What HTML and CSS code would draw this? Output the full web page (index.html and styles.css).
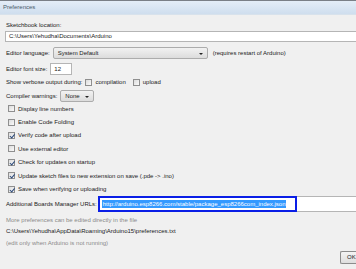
FILE: index.html
```html
<!DOCTYPE html>
<html lang="en">
<head>
    <meta charset="UTF-8">
    <meta name="viewport" content="width=device-width, initial-scale=1.0">
    <title>Preferences</title>
    <link rel="stylesheet" href="styles.css">
</head>
<body>
    <div class="window">
        <div class="titlebar">Preferences</div>
        <div class="content">
            <div class="label-top">Sketchbook location:</div>
            <div class="field path">C:\Users\Yehudha\Documents\Arduino</div>

            <div class="row lang">
                <span class="label">Editor language:</span>
                <div class="select lang-select">System Default<span class="arrow"></span></div>
                <span class="note">(requires restart of Arduino)</span>
            </div>

            <div class="row size">
                <span class="label">Editor font size:</span>
                <div class="field small">12</div>
            </div>

            <div class="row verbose">
                <span class="label">Show verbose output during:</span>
                <span class="check"></span><span class="opt">compilation</span>
                <span class="check"></span><span class="opt">upload</span>
            </div>

            <div class="row warn">
                <span class="label">Compiler warnings:</span>
                <div class="select warn-select">None<span class="arrow"></span></div>
            </div>

            <div class="checklist">
                <div class="item"><span class="check"></span>Display line numbers</div>
                <div class="item"><span class="check"></span>Enable Code Folding</div>
                <div class="item"><span class="check on"></span>Verify code after upload</div>
                <div class="item"><span class="check"></span>Use external editor</div>
                <div class="item"><span class="check on"></span>Check for updates on startup</div>
                <div class="item"><span class="check on"></span>Update sketch files to new extension on save (.pde -&gt; .ino)</div>
                <div class="item"><span class="check on"></span>Save when verifying or uploading</div>
            </div>

            <div class="row urls">
                <span class="label url-label">Additional Boards Manager URLs:</span>
                <div class="url-field">
                    <div class="focus"><span class="selected">http://arduino.esp8266.com/stable/package_esp8266com_index.json</span></div>
                </div>
            </div>

            <div class="info muted">More preferences can be edited directly in the file</div>
            <div class="info">C:\Users\Yehudha\AppData\Roaming\Arduino15\preferences.txt</div>
            <div class="info muted">(edit only when Arduino is not running)</div>

            <div class="buttons">
                <div class="button">OK</div>
            </div>
        </div>
    </div>
</body>
</html>
```

FILE: styles.css
```css
body {
    margin: 0;
    width: 356px;
    height: 269px;
    overflow: hidden;
    font-family: "Liberation Sans", Arial, sans-serif;
    font-size: 6px;
    color: #1a1a1a;
    background-color: #f0f0f0;
}
.window {
    height: 269px;
    border-top: 1px solid #7a7f86;
}
.titlebar {
    height: 13px;
    line-height: 12px;
    padding-left: 3px;
    color: #4a5a6a;
    background: linear-gradient(#e4edf7, #cfdeee);
    border-bottom: 1px solid #d8e2ec;
}
.content {
    padding-left: 6px;
}
.label-top {
    margin-top: 6px;
    height: 9px;
    line-height: 9px;
}
.field {
    background: #fff;
    border: 1px solid #b5b5b5;
    box-sizing: border-box;
    line-height: 9px;
    padding-left: 3px;
}
.path {
    margin-top: 1px;
    margin-left: -1px;
    height: 11px;
    border-right: none;
}
.row {
    display: flex;
    align-items: center;
    white-space: nowrap;
}
.label {
    margin-right: 3px;
}
.url-label {
    margin-right: 1px;
}
.lang {
    margin-top: 5px;
    height: 12px;
}
.select {
    position: relative;
    box-sizing: border-box;
    height: 12px;
    line-height: 10px;
    padding-left: 4px;
    border: 1px solid #acacac;
    border-radius: 2px;
    background: linear-gradient(#f2f2f2, #dcdcdc);
}
.arrow {
    position: absolute;
    right: 4px;
    top: 5px;
    border-left: 2px solid transparent;
    border-right: 2px solid transparent;
    border-top: 2px solid #222;
}
.lang-select {
    width: 155px;
}
.note {
    margin-left: 5px;
}
.size {
    margin-top: 4px;
    height: 12px;
}
.small {
    width: 22px;
    height: 12px;
    line-height: 10px;
}
.verbose {
    margin-top: 2px;
    height: 10px;
}
.check {
    display: inline-block;
    box-sizing: border-box;
    width: 7px;
    height: 7px;
    border: 1px solid #8f8f8f;
    background: linear-gradient(135deg, #dcdcdc, #fafafa);
    margin-right: 3px;
    position: relative;
    flex: none;
}
.check.on::after {
    content: "";
    position: absolute;
    left: 1.5px;
    top: 0;
    width: 1.5px;
    height: 3.5px;
    border-right: 1px solid #2c4a7a;
    border-bottom: 1px solid #2c4a7a;
    transform: rotate(40deg);
}
.opt {
    margin-right: 7px;
}
.warn {
    margin-top: 3px;
    height: 12px;
}
.warn-select {
    width: 34px;
}
.checklist {
    padding-left: 2px;
}
.item {
    display: flex;
    align-items: center;
    height: 13.4px;
    white-space: nowrap;
}
.urls {
    height: 16px;
}
.url-field {
    flex: 1;
    min-width: 0;
    height: 16px;
    box-sizing: border-box;
    background: #fff;
    border: 1px solid #b5b5b5;
    border-right: none;
    display: flex;
    align-items: center;
}
.focus {
    box-sizing: border-box;
    width: 199px;
    height: 16px;
    border: 2px solid #0a1ee6;
    margin-left: -1px;
    padding: 2px;
    display: flex;
    align-items: center;
    overflow: hidden;
}
.selected {
    background: #3399ff;
    color: #fff;
    line-height: 8px;
    padding-left: 1px;
}
.info {
    height: 11.5px;
    line-height: 11.5px;
    white-space: nowrap;
}
.info.muted {
    color: #8a8a8a;
}
.urls + .info {
    margin-top: 3px;
}
.buttons {
    display: flex;
    justify-content: flex-end;
    margin-top: 2px;
}
.button {
    box-sizing: border-box;
    width: 16px;
    height: 13px;
    border: 1px solid #8c8c8c;
    border-right: none;
    border-radius: 2px 0 0 2px;
    background: linear-gradient(#f4f4f4, #dedede);
    line-height: 11px;
    padding-left: 6px;
    overflow: hidden;
    white-space: nowrap;
}
```
